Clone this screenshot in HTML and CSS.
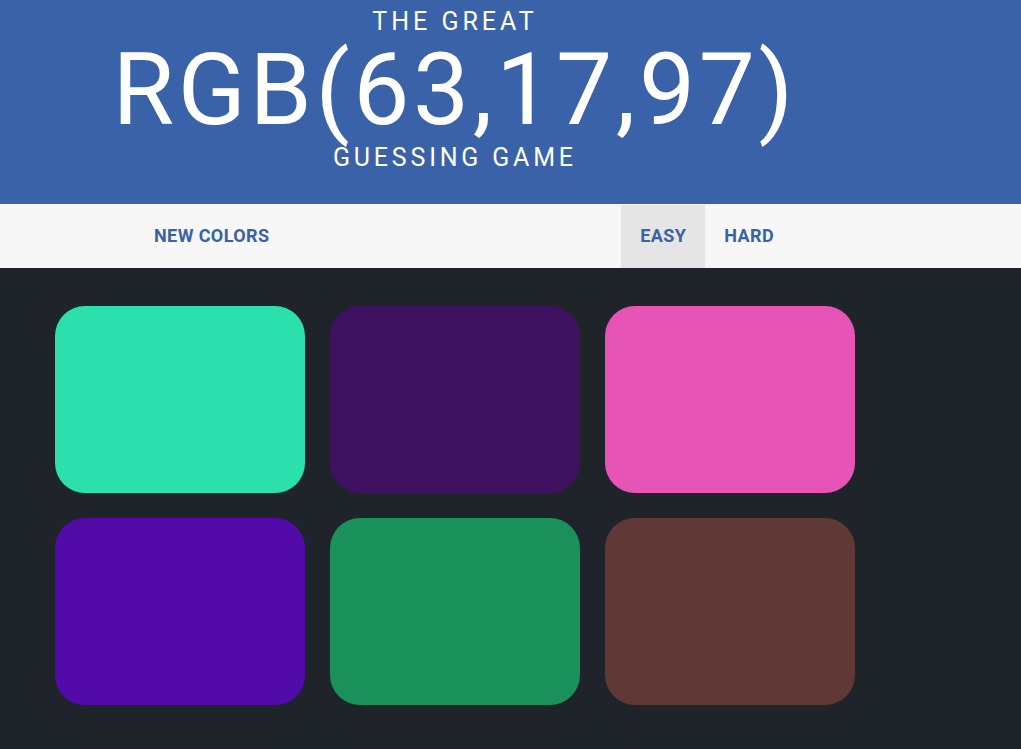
FILE: index.html
```html
<!DOCTYPE html>
<html lang="en">
<head>
<meta charset="utf-8">
<title>The Great RGB Guessing Game</title>
<link rel="stylesheet" href="styles.css">
</head>
<body>
<header class="header">
  <h1 class="title">
    <span class="title-top">THE GREAT</span>
    <span class="title-rgb">RGB(63,17,97)</span>
    <span class="title-bottom">GUESSING GAME</span>
  </h1>
</header>
<nav class="nav">
  <div class="nav-inner">
    <button class="btn">NEW COLORS</button>
    <span class="message"></span>
    <div class="modes">
      <button class="btn btn-selected">EASY</button>
      <button class="btn">HARD</button>
    </div>
  </div>
</nav>
<main class="board">
  <div class="square sq-1"></div>
  <div class="square sq-2"></div>
  <div class="square sq-3"></div>
  <div class="square sq-4"></div>
  <div class="square sq-5"></div>
  <div class="square sq-6"></div>
</main>
</body>
</html>
```
FILE: styles.css
```css
html, body {
  margin: 0;
  padding: 0;
}
body {
  background: #1f242b;
  font-family: Roboto, "Liberation Sans", sans-serif;
  min-height: 749px;
}
.header {
  background: #3a62a8;
  height: 204px;
  padding-right: 115px;
  color: #fff;
}
.title {
  margin: 0;
  font-weight: 400;
  display: flex;
  flex-direction: column;
  align-items: center;
  text-align: center;
}
.title-top {
  font-size: 25px;
  letter-spacing: 4px;
  line-height: 30px;
  padding-top: 7px;
  padding-left: 4px;
}
.title-rgb {
  font-size: 100px;
  line-height: 100px;
  letter-spacing: 3.6px;
  margin-top: 3px;
  padding-left: 3.6px;
}
.title-bottom {
  font-size: 25px;
  letter-spacing: 3.8px;
  line-height: 30px;
  margin-top: 3px;
  padding-left: 3.8px;
}
.nav {
  background: #f7f7f7;
  border-top: 1px solid #fbfbfb;
  height: 63px;
}
.nav-inner {
  display: flex;
  height: 100%;
  padding-left: 135px;
  width: 658px;
}
.message {
  flex: 1;
}
.modes {
  display: flex;
}
.btn {
  border: none;
  background: transparent;
  color: #3a62a8;
  font-family: Roboto, "Liberation Sans", sans-serif;
  font-weight: 700;
  font-size: 18px;
  letter-spacing: 0.4px;
  padding: 0 19px 3px;
  height: 100%;
  cursor: pointer;
}
.btn-selected {
  background: #e5e5e5;
}
.board {
  display: grid;
  grid-template-columns: repeat(3, 250px);
  grid-auto-rows: 187px;
  gap: 25px;
  padding: 38px 0 0 55px;
}
.square {
  border-radius: 30px;
}
.sq-1 { background: #2ce0ad; }
.sq-2 { background: #3f1161; }
.sq-3 { background: #e655b5; }
.sq-4 { background: #520ba9; }
.sq-5 { background: #1a915b; }
.sq-6 { background: #603835; }
```
